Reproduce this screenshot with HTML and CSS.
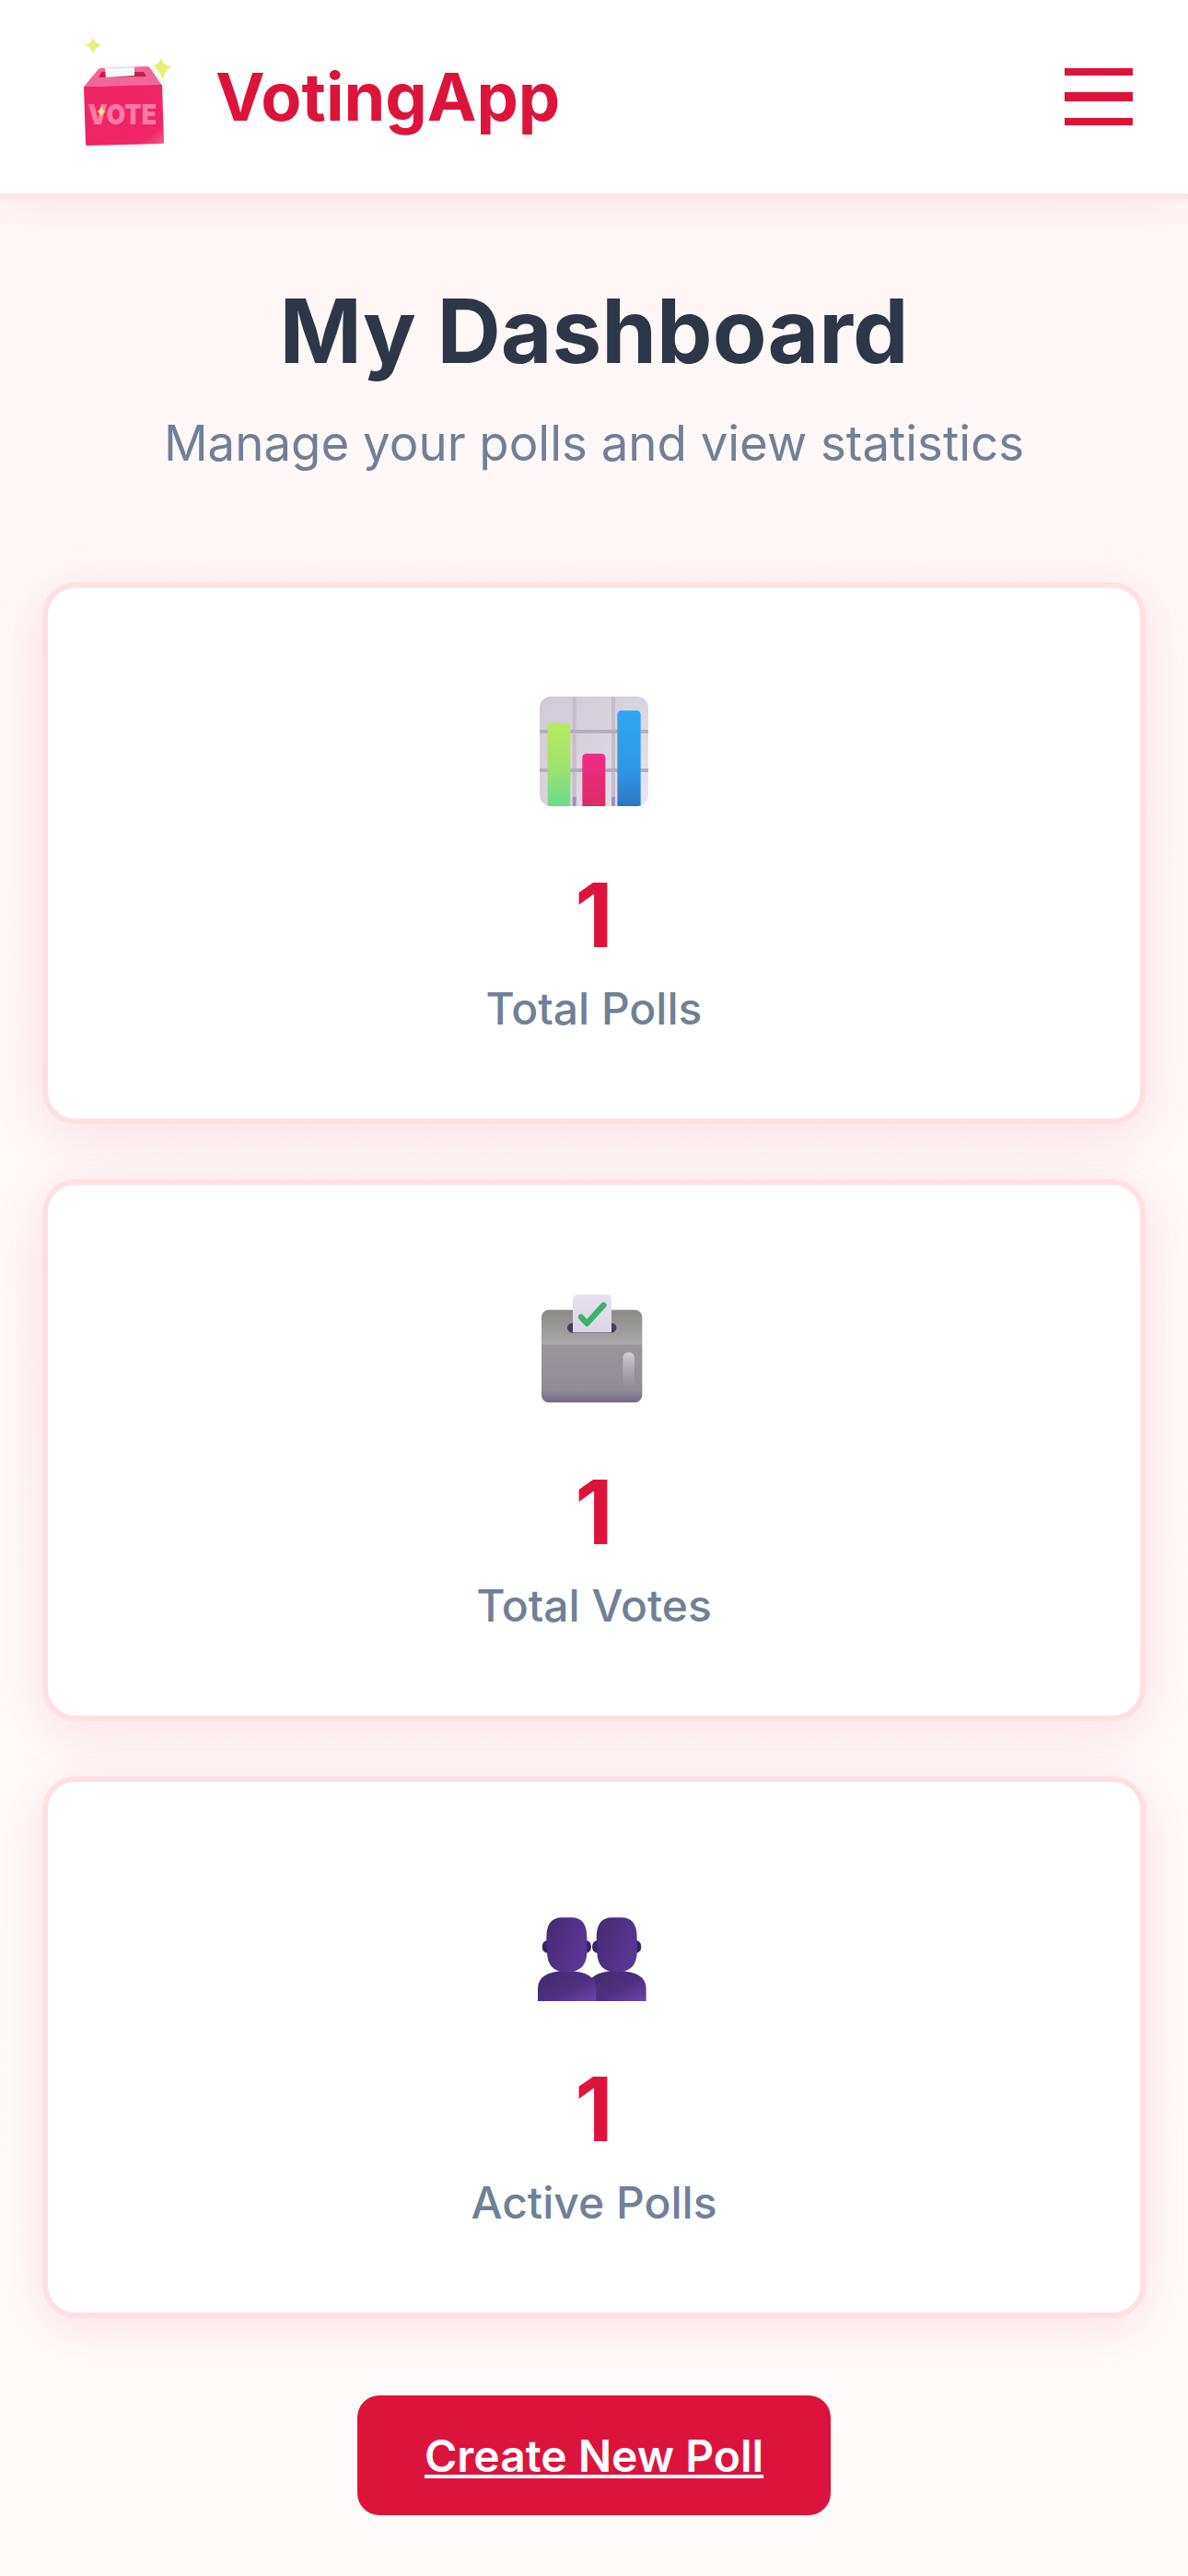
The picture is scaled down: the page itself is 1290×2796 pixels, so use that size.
FILE: index.html
```html
<!DOCTYPE html>
<html lang="en">
<head>
<meta charset="utf-8">
<title>VotingApp</title>
<link rel="stylesheet" href="styles.css">
</head>
<body>
<header class="nav">
  <a class="brand" href="#">
    <svg class="logo" viewBox="85 38 110 125" aria-hidden="true">
      <defs>
        <linearGradient id="vfront" x1="0" y1="0" x2="1" y2="1">
          <stop offset="0" stop-color="#f02463"/><stop offset=".82" stop-color="#ee2566"/><stop offset="1" stop-color="#f2628f"/>
        </linearGradient>
      </defs>
      <path d="M101 41Q103 47 110 49Q104 51 101 58Q99 51 92.500 49Q99 47 101 41Z" fill="#e9ef75"/>
      <path d="M175 63Q177 71 186 72Q178 77 177 87Q173 76 166 71Q173 70 175 63Z" fill="#e9ef75"/>
      <path d="M106 76Q107 74 110 74L160 72Q162 72 164 75L176 93L91 94Z" fill="#f2679a"/>
      <path d="M107 84L110 78L156 78L159 83Z" fill="#c9204f"/>
      <path d="M114 74L146 73L146 82L115 84Z" fill="#f5fafd"/>
      <path d="M91 94L176 92L178 155Q178 156 176 156L95 158Q93 158 93 156Z" fill="url(#vfront)"/>
      <text class="logo-text" x="95.500" y="135" textLength="74.500" lengthAdjust="spacingAndGlyphs">VOTE</text>
      <path d="M110 115Q111 120 115 121Q111 122 110 127Q109 122 105 121Q109 120 110 115Z" fill="#e9ef75"/>
    </svg>
    <span class="brand-name">VotingApp</span>
  </a>
  <button class="burger" type="button" aria-label="Menu"><span></span><span class="mid"></span><span></span></button>
</header>

<main class="page">
  <section class="intro">
    <h1>My Dashboard</h1>
    <p>Manage your polls and view statistics</p>
  </section>

  <section class="stats">
    <article class="card">
      <svg class="icon" viewBox="0 0 510 450" aria-hidden="true">
        <defs>
          <linearGradient id="bg1" x1="0" y1="0" x2="1" y2="1"><stop offset="0" stop-color="#cfcad4"/><stop offset=".5" stop-color="#d9d4e0"/><stop offset="1" stop-color="#ece6f3"/></linearGradient>
          <linearGradient id="gr" x1="0" y1="0" x2="0" y2="1"><stop offset="0" stop-color="#b8ea5e"/><stop offset=".5" stop-color="#9fe36c"/><stop offset="1" stop-color="#68dc8f"/></linearGradient>
          <linearGradient id="pk" x1="0" y1="0" x2="0" y2="1"><stop offset="0" stop-color="#ee2d86"/><stop offset="1" stop-color="#d92c64"/></linearGradient>
          <linearGradient id="bl" x1="0" y1="0" x2="0" y2="1"><stop offset="0" stop-color="#2fa6f3"/><stop offset=".6" stop-color="#2e97e8"/><stop offset="1" stop-color="#2b75c4"/></linearGradient>
          <clipPath id="clip1"><rect x="78" y="78" width="354" height="357" rx="36"/></clipPath>
        </defs>
        <g clip-path="url(#clip1)">
          <rect x="78" y="78" width="354" height="357" fill="url(#bg1)"/>
          <path d="M191 78V435M318 78V435" stroke="#c4bdca" stroke-width="12"/>
          <path d="M78 192H432M78 318H432" stroke="#b5adbc" stroke-width="12"/>
          <path d="M191 405V435M318 405V435" stroke="#a88cc7" stroke-width="12"/>
          <path d="M104 178Q104 164 118 164H164Q178 164 178 178V440H104Z" fill="url(#gr)"/>
          <path d="M217 278Q217 264 231 264H278Q292 264 292 278V440H217Z" fill="url(#pk)"/>
          <path d="M331 138Q331 124 345 124H393Q407 124 407 138V440H331Z" fill="url(#bl)"/>
        </g>
      </svg>
      <strong class="num">1</strong>
      <span class="label">Total Polls</span>
    </article>

    <article class="card">
      <svg class="icon" viewBox="0 -21 510 450" aria-hidden="true">
        <defs>
          <linearGradient id="box" x1="0" y1="0" x2="0" y2="1">
            <stop offset="0" stop-color="#8a8a88"/><stop offset=".37" stop-color="#aaa8aa"/><stop offset=".38" stop-color="#9b969d"/><stop offset=".86" stop-color="#928c96"/><stop offset="1" stop-color="#75658a"/>
          </linearGradient>
          <linearGradient id="paper" x1="0" y1="0" x2="0" y2="1"><stop offset="0" stop-color="#e6e0ef"/><stop offset="1" stop-color="#dcd6e4"/></linearGradient>
          <linearGradient id="hl" x1="0" y1="0" x2="0" y2="1"><stop offset="0" stop-color="#d5d0d8"/><stop offset="1" stop-color="#a09aa4" stop-opacity=".3"/></linearGradient>
        </defs>
        <rect x="84" y="110" width="328" height="302" rx="24" fill="url(#box)"/>
        <rect x="168" y="153" width="160" height="32" rx="16" fill="#4b3a63"/>
        <path d="M186 184V78Q186 60 204 60H294Q312 60 312 78V184Z" fill="url(#paper)"/>
        <path d="M213 134L232 154L286 95" fill="none" stroke="#37b36a" stroke-width="19" stroke-linecap="round" stroke-linejoin="round"/>
        <rect x="349" y="248" width="38" height="112" rx="19" fill="url(#hl)"/>
      </svg>
      <strong class="num">1</strong>
      <span class="label">Total Votes</span>
    </article>

    <article class="card">
      <svg class="icon" viewBox="0 -72 510 450" aria-hidden="true">
        <defs>
          <linearGradient id="puBody" x1="0" y1="0" x2="1" y2="1"><stop offset="0" stop-color="#412a6c"/><stop offset=".6" stop-color="#4f3184"/><stop offset="1" stop-color="#6b46a8"/></linearGradient>
          <linearGradient id="puHead" x1="0" y1="0" x2="1" y2=".5"><stop offset="0" stop-color="#452a72"/><stop offset="1" stop-color="#583793"/></linearGradient>
          <g id="person">
            <ellipse cx="102" cy="189" rx="16" ry="20" fill="#3a2264"/>
            <ellipse cx="230" cy="189" rx="16" ry="20" fill="#3a2264"/>
            <path d="M72 366V326Q72 268 166 268Q262 268 262 326V366Z" fill="url(#puBody)"/>
            <path d="M100 160Q100 94 150 94H182Q232 94 232 160V205Q232 272 166 272Q102 272 102 205Z" fill="url(#puHead)"/>
          </g>
        </defs>
        <use href="#person" x="163"/>
        <use href="#person"/>
      </svg>
      <strong class="num">1</strong>
      <span class="label">Active Polls</span>
    </article>
  </section>

  <div class="actions"><a class="cta" href="#">Create New Poll</a></div>
</main>
</body>
</html>
```
FILE: styles.css
```css
* { box-sizing: border-box; }
html, body { margin: 0; padding: 0; }
body {
  height: 2796px;
  overflow: hidden;
  font-family: Inter, "Liberation Sans", sans-serif;
  background: linear-gradient(180deg, #fff7f6 0%, #fffbfb 100%);
}
.nav {
  height: 216px;
  padding: 0 60px 0 85px;
  display: flex;
  align-items: center;
  justify-content: space-between;
  background: #fff;
  border-bottom: 6px solid #fde4e6;
  box-shadow: 0 6px 48px rgba(220, 20, 60, .07);
  position: relative;
}
.brand { display: flex; align-items: center; gap: 39px; text-decoration: none; }
.logo { display: block; width: 110px; height: 125px; margin-bottom: 9px; }
.logo-text { font: 900 30px Inter, sans-serif; fill: #fd79a8; }
.brand-name { font-size: 72px; font-weight: 700; color: #dc143c; line-height: 1; }
.burger { width: 74px; height: 62px; padding: 0; border: 0; background: none; display: flex; flex-direction: column; justify-content: space-between; }
.burger span { display: block; height: 8px; background: #dc143c; }
.burger .mid { height: 10px; }
.page { padding: 85px 46px 0; }
.intro { text-align: center; }
.intro h1 { margin: 0; font-size: 96px; line-height: 116px; font-weight: 700; color: #2d3748; }
.intro p { margin: 32px 0 0; font-size: 52.8px; line-height: 64px; color: #718096; }
.stats { margin-top: 119px; display: flex; flex-direction: column; gap: 60px; }
.card {
  height: 588px;
  background: #fff;
  border: 6px solid #ffe0e3;
  border-radius: 36px;
  box-shadow: 0 12px 60px rgba(220, 20, 60, .1);
  display: flex;
  flex-direction: column;
  align-items: center;
  padding-top: 92px;
}
.icon { width: 170px; height: 150px; display: block; overflow: visible; }
.num { margin-top: 55px; font-size: 96px; line-height: 116px; font-weight: 700; color: #dc143c; }
.label { margin-top: 15px; font-size: 48px; line-height: 58px; font-weight: 500; color: #718096; }
.actions { margin-top: 84px; display: flex; justify-content: center; }
.cta {
  width: 514px;
  height: 130px;
  border-radius: 24px;
  background: #dc143c;
  color: #fff;
  font-size: 48px;
  font-weight: 600;
  display: flex;
  align-items: center;
  justify-content: center;
  text-decoration: underline;
}
```
